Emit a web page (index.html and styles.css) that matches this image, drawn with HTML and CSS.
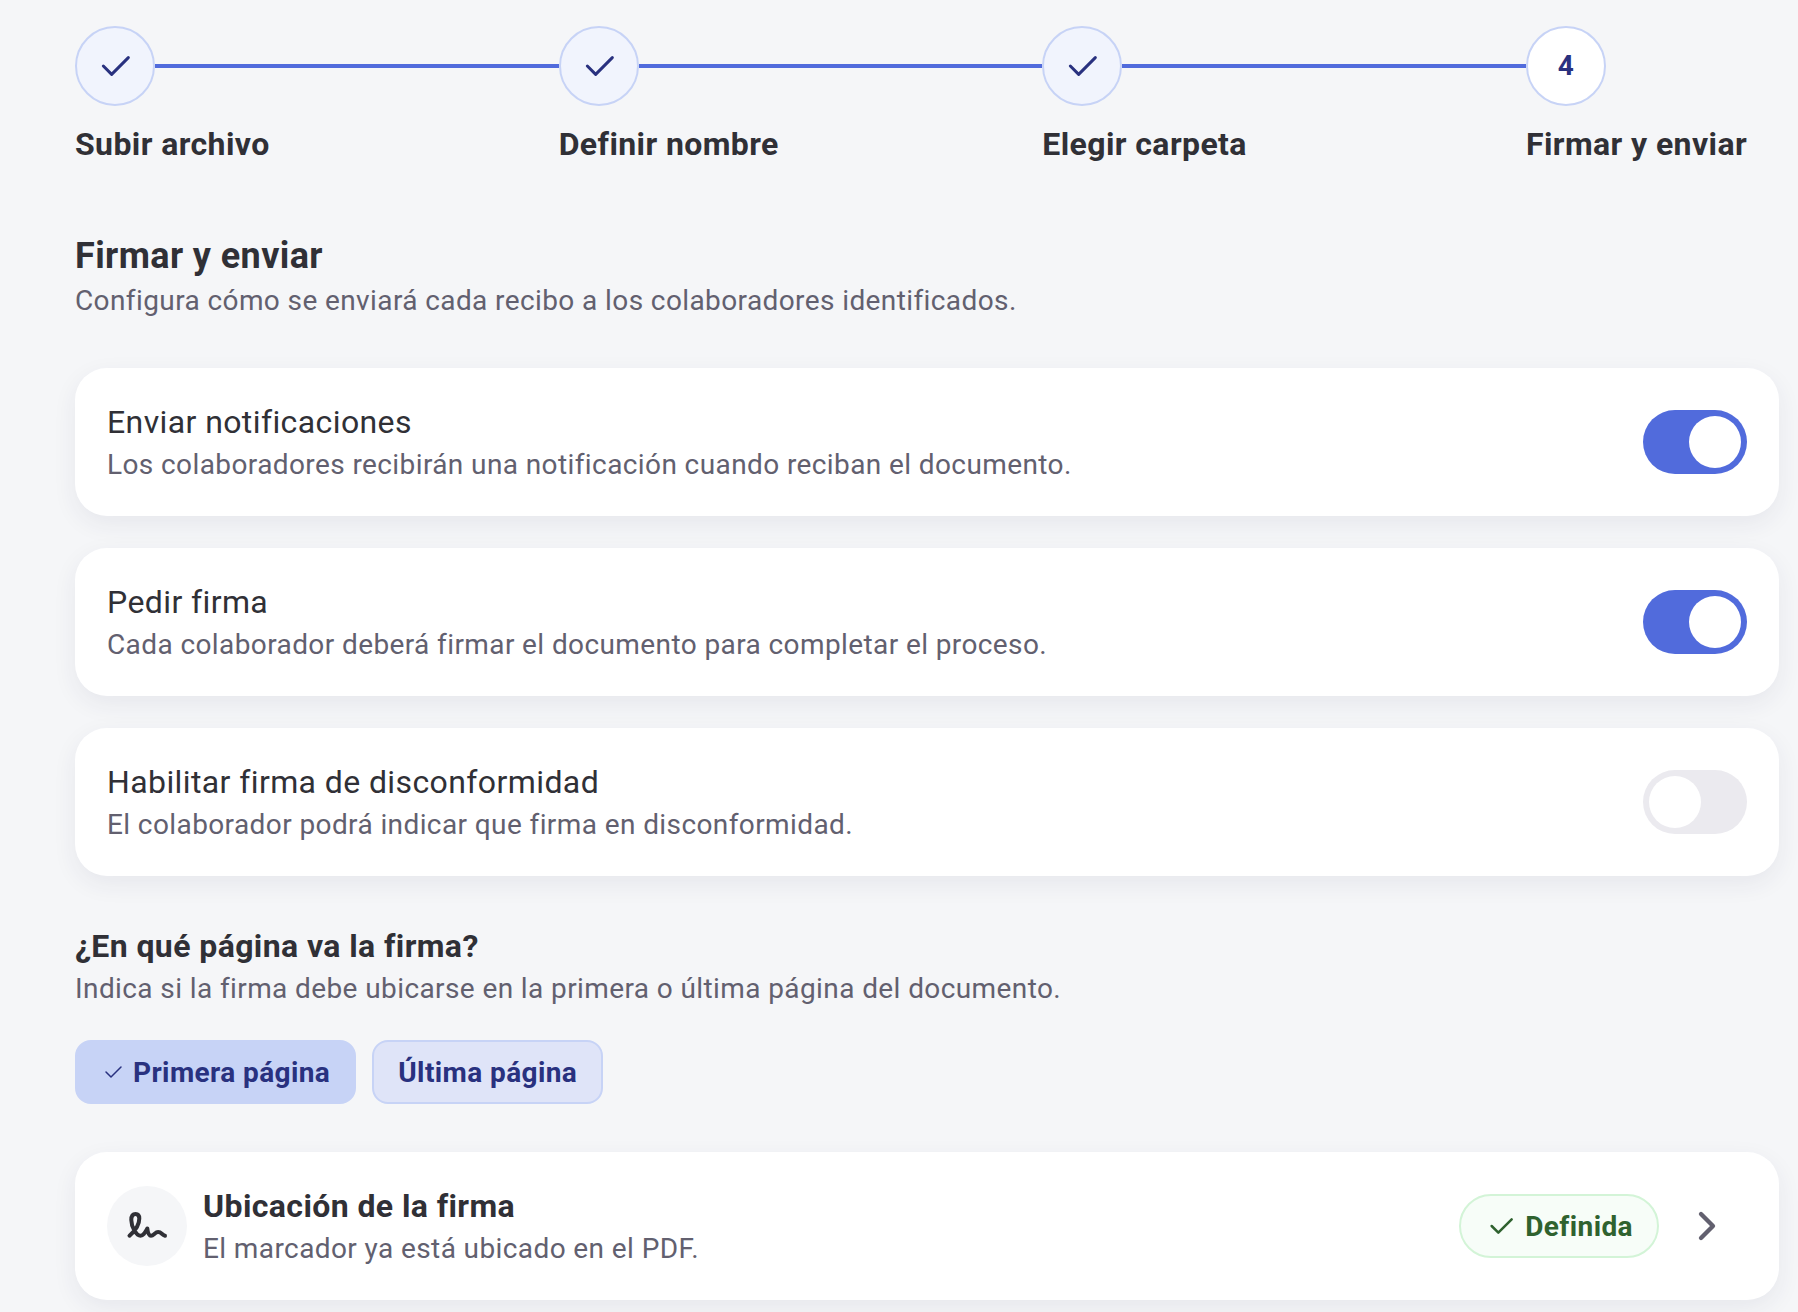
FILE: index.html
```html
<!DOCTYPE html>
<html lang="es">
<head>
<meta charset="utf-8">
<title>Firmar y enviar</title>
<link rel="stylesheet" href="styles.css">
</head>
<body>
<svg class="sprite" aria-hidden="true">
  <symbol id="check" viewBox="0 0 24 24"><path d="M5 12l5 5L20 7" fill="none" stroke="currentColor" stroke-linecap="round" stroke-linejoin="round"/></symbol>
</svg>
<main class="page">
  <ol class="stepper">
    <li class="step"><div class="track"><span class="dot done"><svg class="dot-check"><use href="#check"/></svg></span><span class="line"></span></div><span class="label">Subir archivo</span></li>
    <li class="step"><div class="track"><span class="dot done"><svg class="dot-check"><use href="#check"/></svg></span><span class="line"></span></div><span class="label">Definir nombre</span></li>
    <li class="step"><div class="track"><span class="dot done"><svg class="dot-check"><use href="#check"/></svg></span><span class="line"></span></div><span class="label">Elegir carpeta</span></li>
    <li class="step last"><div class="track"><span class="dot current">4</span></div><span class="label">Firmar y enviar</span></li>
  </ol>

  <header class="intro">
    <h1>Firmar y enviar</h1>
    <p class="sub">Configura cómo se enviará cada recibo a los colaboradores identificados.</p>
  </header>

  <section class="cards">
    <div class="card"><div class="text"><p class="title">Enviar notificaciones</p><p class="sub">Los colaboradores recibirán una notificación cuando reciban el documento.</p></div><span class="toggle on"></span></div>
    <div class="card"><div class="text"><p class="title">Pedir firma</p><p class="sub">Cada colaborador deberá firmar el documento para completar el proceso.</p></div><span class="toggle on"></span></div>
    <div class="card"><div class="text"><p class="title">Habilitar firma de disconformidad</p><p class="sub">El colaborador podrá indicar que firma en disconformidad.</p></div><span class="toggle"></span></div>
  </section>

  <section class="question">
    <h2 class="title strong">¿En qué página va la firma?</h2>
    <p class="sub">Indica si la firma debe ubicarse en la primera o última página del documento.</p>
    <div class="options">
      <button class="option selected"><svg class="option-check"><use href="#check"/></svg>Primera página</button>
      <button class="option">Última página</button>
    </div>
  </section>

  <div class="card location">
    <span class="avatar"><svg width="48" height="48" viewBox="0 0 48 48" fill="none" stroke="currentColor" stroke-width="4" stroke-linecap="round" stroke-linejoin="round"><path d="M6.500 33.700C12 29 16.300 22.500 16.300 16.500C16.300 13.500 14.800 12 12.600 12C9.800 12 8.300 14.500 8.300 18C8.300 25 13.500 33.700 17.500 33.700C20.500 33.700 22 30.500 24.300 26.500C24.800 30.500 25.800 33.700 28 33.700C30.800 33.700 32 30 35.200 30C38.500 30 38.800 33 42 33.700"/></svg></span>
    <div class="text"><p class="title strong">Ubicación de la firma</p><p class="sub">El marcador ya está ubicado en el PDF.</p></div>
    <span class="badge"><svg class="badge-check"><use href="#check"/></svg>Definida</span>
    <svg class="chevron" width="48" height="48" viewBox="0 0 48 48" fill="none" stroke="currentColor" stroke-width="4.300" stroke-linecap="round" stroke-linejoin="round"><path d="M18 12l12 12-12 12"/></svg>
  </div>
</main>
</body>
</html>
```
FILE: styles.css
```css
* { box-sizing: border-box; }
body { margin: 0; background: #f5f6f8; color: #303036; font-family: Roboto, "Liberation Sans", sans-serif; font-size: 28px; letter-spacing: 0.4px; overflow: hidden; }
h1, h2, p, ol { margin: 0; padding: 0; }
.sprite { position: absolute; width: 0; height: 0; }
.page { padding: 26px 19px 0 75px; height: 1312px; overflow: hidden; }
.stepper { display: flex; list-style: none; }
.step { width: 483.67px; flex: none; }
.step.last { width: 253px; }
.track { display: flex; align-items: center; }
.dot { flex: none; width: 80px; height: 80px; border: 2px solid #c7d3f6; border-radius: 50%; background: #fff; color: #29317f; display: flex; align-items: center; justify-content: center; font-weight: 700; }
.dot.done { background: #f1f4fd; }
.dot.current { padding-bottom: 2px; }
.dot-check { width: 40px; height: 40px; stroke-width: 1.800; }
.line { flex: 1; height: 4px; background: #516bdc; }
.label { display: block; margin-top: 16px; font-size: 32px; line-height: 44px; font-weight: 700; white-space: nowrap; }
.intro { margin-top: 66px; }
h1 { font-size: 36px; line-height: 48px; font-weight: 700; }
.sub { padding-top: 2px; font-size: 28px; line-height: 38px; color: #62606f; white-space: nowrap; }
.title { font-size: 32px; line-height: 44px; font-weight: 400; }
.title.strong { font-weight: 700; }
.cards { display: flex; flex-direction: column; gap: 32px; margin-top: 48px; }
.card { height: 148px; padding: 32px; display: flex; align-items: center; background: #fff; border-radius: 32px; box-shadow: 0 8px 24px rgba(48, 48, 90, 0.07); }
.text { flex: 1; }
.toggle { width: 104px; height: 64px; padding: 6px; border-radius: 32px; background: #ebeaef; display: flex; }
.toggle::before { content: ""; width: 52px; height: 52px; border-radius: 50%; background: #fff; }
.toggle.on { background: #516bdc; justify-content: flex-end; }
.question { margin-top: 48px; }
.options { display: flex; gap: 16px; margin-top: 32px; }
.option { height: 64px; padding: 0 24px; border: 2px solid #c7d3f6; border-radius: 16px; background: #dfe4f8; color: #29317f; font: inherit; font-weight: 700; letter-spacing: 0.4px; display: flex; align-items: center; }
.option.selected { background: #c7d3f6; }
.option-check { width: 24px; height: 24px; margin-right: 8px; stroke-width: 1.500; }
.location { margin-top: 48px; }
.avatar { width: 80px; height: 80px; margin-right: 16px; border-radius: 50%; background: #f5f6f8; display: flex; align-items: center; justify-content: center; }
.badge { height: 64px; padding: 0 24px; border: 2px solid #d3f4d7; border-radius: 32px; background: #f7fdf8; color: #2f622f; font-weight: 700; display: flex; align-items: center; }
.badge-check { width: 32px; height: 32px; margin-right: 8px; stroke-width: 1.900; }
.chevron { margin: 0 16px 0 24px; color: #62606f; }
```
